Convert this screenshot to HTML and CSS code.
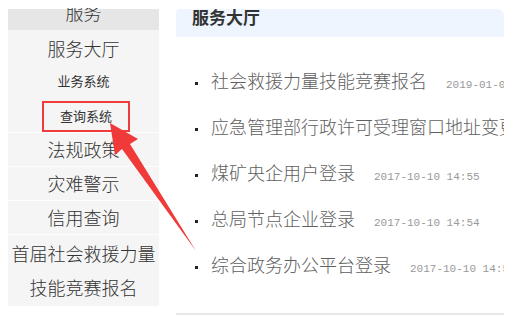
FILE: index.html
```html
<!DOCTYPE html>
<html lang="zh-CN">
<head>
    <meta charset="UTF-8">
    <title>服务大厅</title>
    <link rel="stylesheet" href="styles.css">
</head>
<body>
    <div class="page">
        <div class="sidebar">
            <div class="sidebar-top">服务</div>
            <div class="menu-title">服务大厅</div>
            <div class="sub-item">业务系统</div>
            <div class="sub-item sub-active">查询系统</div>
            <div class="menu-item">法规政策</div>
            <div class="menu-item">灾难警示</div>
            <div class="menu-item">信用查询</div>
            <div class="menu-item menu-wrap">首届社会救援力量<br>技能竞赛报名</div>
        </div>

        <div class="main">
            <div class="main-head">服务大厅</div>
            <ul class="news">
                <li><span class="title">社会救援力量技能竞赛报名</span><span class="date">2019-01-08 09:30</span></li>
                <li><span class="title">应急管理部行政许可受理窗口地址变更公告</span><span class="date">2018-12-20 10:12</span></li>
                <li><span class="title">煤矿央企用户登录</span><span class="date">2017-10-10 14:55</span></li>
                <li><span class="title">总局节点企业登录</span><span class="date">2017-10-10 14:54</span></li>
                <li><span class="title">综合政务办公平台登录</span><span class="date">2017-10-10 14:53</span></li>
            </ul>
        </div>
    </div>

    <!-- annotation arrow drawn over the page -->
    <svg class="arrow" width="521" height="317" viewBox="0 0 521 317">
        <polygon points="110,123 138,139 130,144 196,251 122,149 115,155" fill="#f03a3a"/>
    </svg>
</body>
</html>
```

FILE: styles.css
```css
* {
    margin: 0;
    padding: 0;
    box-sizing: border-box;
}

body {
    margin: 8px;
    padding-top: 1px;
    font-family: "Noto Sans CJK SC", "Microsoft YaHei", sans-serif;
    background: #fff;
    color: #333;
    overflow: hidden;
}

.page {
    display: flex;
    align-items: flex-start;
    gap: 17px;
}

/* left menu */
.sidebar {
    width: 151px;
    flex-shrink: 0;
    background: #f5f5f5;
    text-align: center;
    font-size: 18px;
    font-weight: 300;
    padding-bottom: 2px;
}

.sidebar-top {
    height: 21px;
    line-height: 6px;
    background: #e6e6e6;
}

.menu-title {
    line-height: 36px;
}

.sub-item {
    font-size: 13px;
    font-weight: normal;
    line-height: 30px;
}

.sub-active {
    width: 88px;
    margin: 5px 0 0 34px;
    line-height: 26px;
    padding-bottom: 1px;
    border: 2px solid #ef3b3b;
}

.menu-item {
    line-height: 33px;
    border-top: 1px solid #fdfdfd;
}

.menu-wrap {
    line-height: 34px;
    padding-top: 1px;
}

/* right list */
.main {
    width: 328px;
    flex-shrink: 0;
    overflow: hidden;
    border-bottom: 2px solid #e8e8e8;
}

.main-head {
    height: 28px;
    line-height: 16px;
    padding-left: 16px;
    background: #eef5fe;
    border-radius: 4px 7px 0 0;
    font-size: 17px;
    font-weight: bold;
    color: #333;
}

.news {
    list-style: none;
    padding: 20px 0 26px 19px;
}

.news li {
    white-space: nowrap;
    line-height: 46px;
    height: 46px;
}

.news li::before {
    content: "";
    display: inline-block;
    width: 3px;
    height: 3px;
    background: #222;
    margin-right: 13px;
    vertical-align: middle;
}

.title {
    font-size: 18px;
    font-weight: 300;
    color: #606060;
}

.date {
    font-family: "Liberation Mono", monospace;
    font-size: 11px;
    color: #999;
    margin-left: 19px;
}

.arrow {
    position: absolute;
    top: 0;
    left: 0;
    pointer-events: none;
}
```
